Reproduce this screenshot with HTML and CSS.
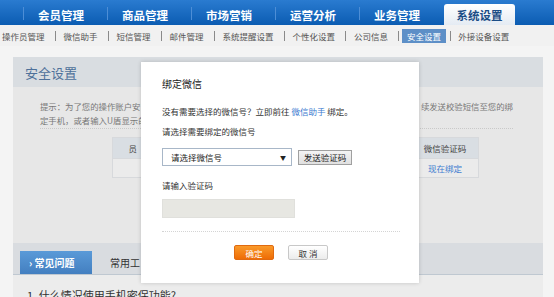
FILE: index.html
```html
<!DOCTYPE html>
<html lang="zh-CN">
<head>
<meta charset="utf-8">
<title>安全设置</title>
<link rel="stylesheet" href="styles.css">
</head>
<body>
<div class="topnav">
  <div class="tab">会员管理</div>
  <div class="tab">商品管理</div>
  <div class="tab">市场营销</div>
  <div class="tab">运营分析</div>
  <div class="tab">业务管理</div>
  <div class="tab active">系统设置</div>
</div>
<div class="subnav">
  <span class="item">操作员管理</span><i class="sep"></i>
  <span class="item">微信助手</span><i class="sep"></i>
  <span class="item">短信管理</span><i class="sep"></i>
  <span class="item">邮件管理</span><i class="sep"></i>
  <span class="item">系统提醒设置</span><i class="sep"></i>
  <span class="item">个性化设置</span><i class="sep"></i>
  <span class="item">公司信息</span><i class="sep sep-before-active"></i>
  <span class="item active">安全设置</span><i class="sep sep-after-active"></i>
  <span class="item">外接设备设置</span>
</div>
<div class="content">
  <div class="panel">
    <div class="panel-head">安全设置</div>
    <div class="tip">
      <div class="tip-line"><span>提示：为了您的操作账户安</span><span>续发送校验短信至您的绑</span></div>
      <div class="tip-line"><span>定手机，或者输入U盾显示的</span></div>
    </div>
    <table class="grid">
      <tr class="grid-head"><th class="c1">员</th><th class="c2"></th><th class="c3"></th><th class="c4">微信验证码</th></tr>
      <tr class="grid-row"><td class="c1"></td><td class="c2 masked">•</td><td class="c3"></td><td class="c4"><span class="link">现在绑定</span></td></tr>
    </table>
  </div>
  <div class="panel2">
    <div class="tabbar">
      <div class="qtab active">› 常见问题</div>
      <div class="qtab">常用工</div>
    </div>
    <div class="faq">1. 什么情况使用手机密保功能?</div>
  </div>
</div>

<div class="modal">
  <div class="modal-title">绑定微信</div>
  <div class="modal-line">没有需要选择的微信号？立即前往 <span class="link">微信助手</span> 绑定。</div>
  <div class="modal-label">请选择需要绑定的微信号</div>
  <div class="select-row">
    <div class="select"><span>请选择微信号</span><span class="arrow">▼</span></div>
    <div class="btn-send">发送验证码</div>
  </div>
  <div class="modal-label label2">请输入验证码</div>
  <div class="code-input"></div>
  <div class="dotline"></div>
  <div class="actions">
    <div class="btn-ok">确定</div>
    <div class="btn-cancel">取 消</div>
  </div>
</div>
</body>
</html>
```
FILE: styles.css
```css
html, body {
  margin: 0;
  padding: 0;
}
body {
  position: relative;
  width: 554px;
  height: 297px;
  overflow: hidden;
  background: #f4f4f4;
  font-family: "Noto Sans CJK SC", "Noto Sans", sans-serif;
}

/* top navigation */
.topnav {
  display: flex;
  height: 25px;
  padding-left: 19px;
  background: linear-gradient(#2a7bd0, #0b5cb2);
}
.tab {
  position: relative;
  width: 84px;
  padding-top: 4px;
  box-sizing: border-box;
  display: flex;
  align-items: center;
  justify-content: center;
  color: #fff;
  font-weight: bold;
  font-size: 11.5px;
}
.tab::before {
  content: "";
  position: absolute;
  left: 4px;
  top: 7px;
  bottom: 5px;
  width: 1px;
  background: #4d8ed6;
}
.tab.active {
  width: 71px;
  margin: 4px 0 0 5px;
  padding-top: 0;
  background: linear-gradient(#ffffff, #e4ebf3);
  color: #1b4d86;
  border-radius: 3px 3px 0 0;
}
.tab.active::before {
  display: none;
}

/* sub navigation */
.subnav {
  display: flex;
  align-items: center;
  height: 21px;
  padding-left: 2px;
  background: #f1f1f1;
  font-size: 8.5px;
  color: #555;
  white-space: nowrap;
}
.sep {
  width: 1px;
  height: 10px;
  background: #8a8a8a;
  margin: 0 8px 0 10px;
}
.sep-before-active {
  margin-right: 3px;
}
.item.active {
  background: #5d8fc7;
  color: #fff;
  padding: 2px 5px;
  line-height: 10px;
}
.sep-after-active {
  margin-left: 4px;
  margin-right: 7px;
}

/* content */
.content {
  padding: 11px 11px 0 13px;
}
.panel {
  height: 186px;
  background: #e7e7e7;
}
.panel-head {
  height: 30px;
  display: flex;
  align-items: center;
  padding-left: 12px;
  background: #d9dde1;
  color: #4f719a;
  font-size: 13px;
}
.tip {
  margin: 12px 30px 0 27px;
  padding-bottom: 1px;
  border-bottom: 1px dotted #c9c9c9;
  font-size: 8.4px;
  line-height: 14px;
  color: #777;
}
.tip-line {
  display: flex;
  justify-content: space-between;
  white-space: nowrap;
}
.grid {
  margin: 8px 0 0 99px;
  width: 360px;
  border-collapse: collapse;
  font-size: 8.5px;
  table-layout: fixed;
}
.grid th, .grid td {
  border: 1px solid #d7d9dc;
  padding: 0;
  font-weight: normal;
  text-align: center;
  color: #555;
}
.grid-head th {
  height: 20px;
  background: #d9dee3;
  color: #444;
}
.grid-head th.c1 {
  text-align: right;
  padding-right: 4px;
}
.grid-row td {
  height: 18px;
  background: #ebebeb;
}
.c1 { width: 24px; }
.c2 { width: 140px; }
.c3 { width: 128px; }
.c4 { width: 66px; }
.grid .masked {
  text-align: left;
  color: #777;
}
.link {
  color: #3d7bd0;
}

/* bottom panel */
.panel2 {
  background: #ececec;
}
.tabbar {
  display: flex;
  align-items: flex-end;
  height: 31px;
  padding-left: 7px;
  background: #d9dce0;
  border-bottom: 1px solid #bfc8d1;
}
.qtab {
  height: 23px;
  display: flex;
  align-items: center;
  font-size: 10px;
  color: #333;
  padding-left: 18px;
}
.qtab.active {
  width: 72px;
  box-sizing: border-box;
  padding-left: 9px;
  background: linear-gradient(#5a9ad8, #437fc0);
  color: #fff;
  font-weight: bold;
}
.faq {
  padding: 12px 0 0 14px;
  font-size: 11px;
  line-height: 16px;
  color: #333;
}

/* modal dialog (overlays content) */
.modal {
  position: absolute;
  left: 141px;
  top: 62px;
  width: 278px;
  height: 221px;
  box-sizing: border-box;
  padding: 15px 19px 0 21px;
  background: #fff;
  box-shadow: 0 0 4px rgba(0, 0, 0, 0.18);
  font-size: 8.5px;
  color: #333;
}
.modal-title {
  font-size: 10px;
  line-height: 14px;
  color: #222;
}
.modal-line {
  margin-top: 14px;
  line-height: 12px;
}
.modal-label {
  margin-top: 8px;
  line-height: 12px;
}
.select-row {
  display: flex;
  align-items: center;
  margin-top: 11px;
  gap: 6px;
}
.select {
  width: 130px;
  height: 18px;
  box-sizing: border-box;
  display: flex;
  align-items: center;
  justify-content: space-between;
  padding: 0 5px 0 8px;
  border: 1px solid #a8b7c8;
  background: #fff;
  color: #222;
}
.arrow {
  font-size: 6px;
  color: #222;
}
.btn-send {
  width: 54px;
  height: 15px;
  box-sizing: border-box;
  display: flex;
  align-items: center;
  justify-content: center;
  border: 1px solid #a0a0a0;
  background: linear-gradient(#f4f4f4, #e0e0e0);
  color: #222;
}
.label2 {
  margin-top: 13px;
}
.code-input {
  margin-top: 8px;
  width: 133px;
  height: 19px;
  box-sizing: border-box;
  background: #e7e7e2;
  border: 1px solid #e0e0dc;
}
.dotline {
  margin-top: 13px;
  border-top: 1px dotted #d4d4d4;
}
.actions {
  display: flex;
  justify-content: center;
  gap: 14px;
  margin-top: 13px;
}
.btn-ok, .btn-cancel {
  width: 40px;
  height: 15px;
  box-sizing: border-box;
  display: flex;
  align-items: center;
  justify-content: center;
  border-radius: 2px;
}
.btn-ok {
  background: linear-gradient(#fa9a2a, #ee6c06);
  color: #fff;
  border: 1px solid #e06a10;
}
.btn-cancel {
  background: linear-gradient(#ffffff, #ececec);
  border: 1px solid #c8c8c8;
  color: #333;
}
```
